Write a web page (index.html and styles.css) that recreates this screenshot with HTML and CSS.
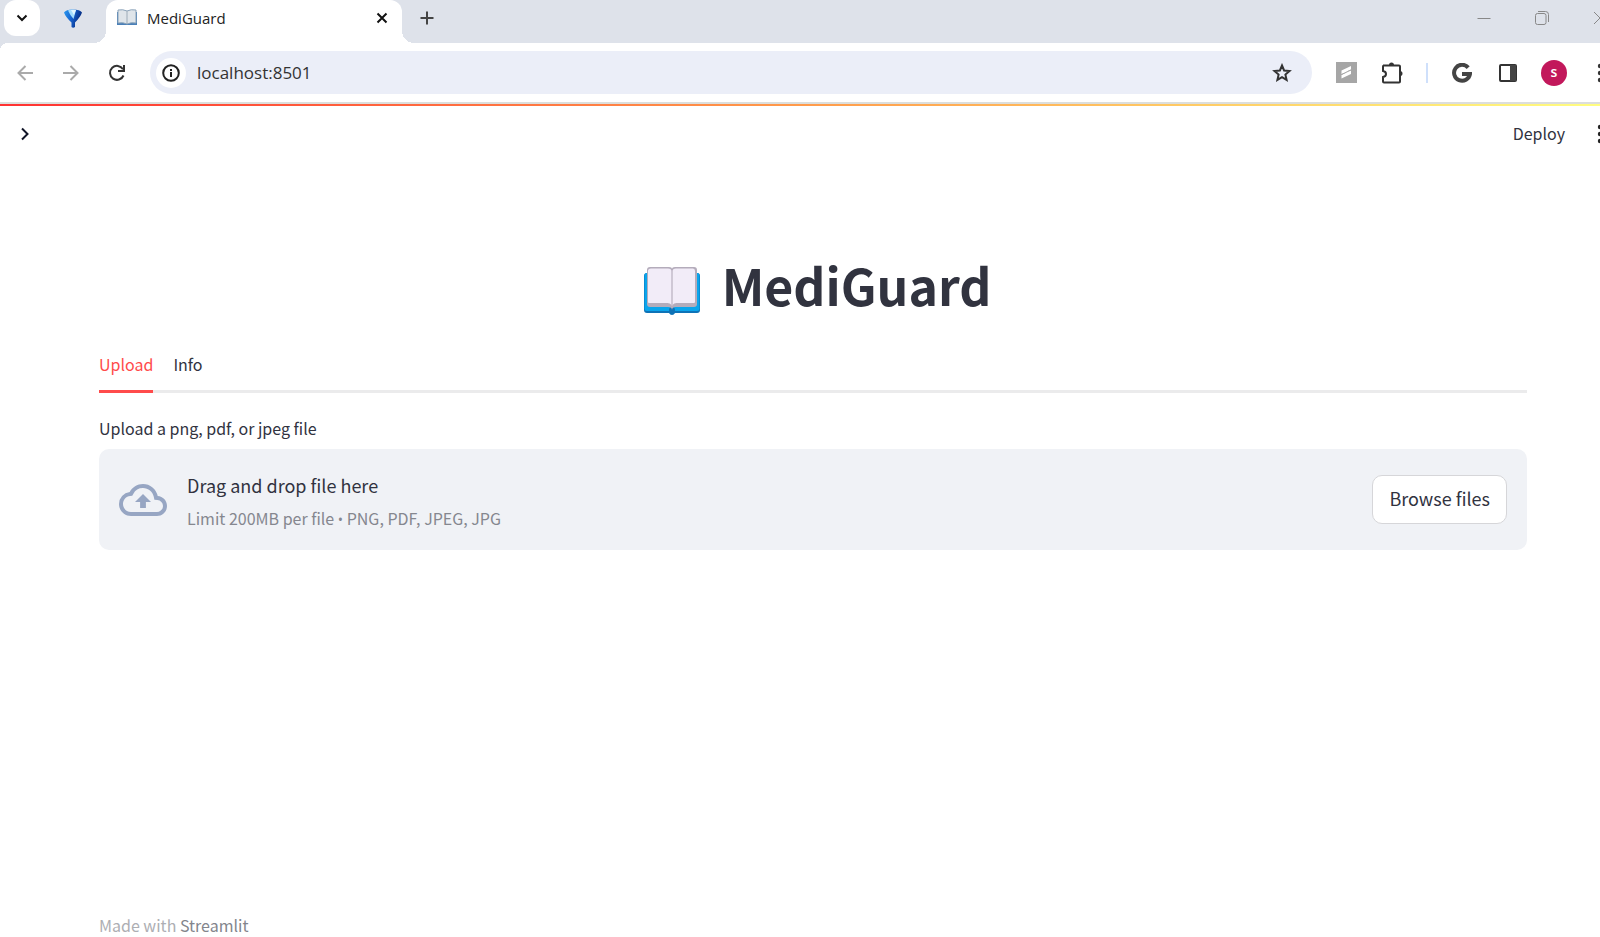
FILE: index.html
```
<!DOCTYPE html>
<html lang="en">
<head>
  <meta charset="UTF-8">
  <title>MediGuard</title>
  <link rel="stylesheet" href="styles.css">
</head>
<body>
  <!-- Browser tab strip -->
  <div class="tab-strip">
    <button class="tab-search" aria-label="Search tabs">
      <svg width="12" height="12" viewBox="0 0 12 12" fill="none" stroke="#111" stroke-width="2"><path d="M1.5 3.5 6 8l4.500-4.500"/></svg>
    </button>
    <button class="pinned-tab" aria-label="Pinned tab">
      <svg width="18" height="20" viewBox="0 0 18 20">
        <defs><linearGradient id="gem" x1="0" y1="0" x2="1" y2="0.300"><stop offset="0" stop-color="#2a9af0"/><stop offset="0.500" stop-color="#1763cf"/><stop offset="1" stop-color="#052b80"/></linearGradient></defs>
        <path d="M0 4.500Q2 1.500 9 1.500t9 3q-1.500 4.500-7 10V19q-2 1.500-3.500 0v-4.500Q1.500 9 0 4.500z" fill="url(#gem)"/>
        <path d="M4 2.500Q7 1 12 2l-2.500 9Q6 7 4 2.500z" fill="#a5defd"/>
        <path d="M7 2q3-.5 5 0l-2 5z" fill="#e2f6ff"/>
      </svg>
    </button>
    <div class="tab">
      <svg width="22" height="18" viewBox="0 0 22 18">
        <path d="M1 3h20v13H1z" fill="#4a80b8"/>
        <path d="M2 1q5-1 9 1 4-2 9-1v13q-5-1-9 1-4-2-9-1z" fill="#dfe5ea" stroke="#8ba3b9"/>
        <path d="M11 2v13" stroke="#9cabb8"/>
      </svg>
      <span class="tab-title">MediGuard</span>
      <button class="tab-close" aria-label="Close tab">
        <svg width="12" height="12" viewBox="0 0 12 12" stroke="#111" stroke-width="2"><path d="m1.500 1.500 9 9m0-9-9 9"/></svg>
      </button>
    </div>
    <button class="new-tab" aria-label="New tab">
      <svg width="14" height="14" viewBox="0 0 14 14" stroke="#444" stroke-width="2"><path d="M7 .5v13M.5 7h13"/></svg>
    </button>
    <div class="window-controls">
      <button aria-label="Minimize"><svg width="14" height="14" viewBox="0 0 14 14" stroke="#888"><path d="M.5 7.500h13"/></svg></button>
      <button aria-label="Restore"><svg width="14" height="14" viewBox="0 0 14 14" fill="none" stroke="#888"><rect x=".5" y="2.500" width="10.500" height="11" rx="2"/><path d="M3 .5h7.500q3 0 3 3V11"/></svg></button>
      <button aria-label="Close"><svg width="14" height="14" viewBox="0 0 14 14" stroke="#888"><path d="m1 1 12 12M13 1 1 13"/></svg></button>
    </div>
  </div>

  <!-- Browser toolbar -->
  <div class="toolbar">
    <button class="tool" aria-label="Back"><svg width="16" height="16" viewBox="0 0 16 16" fill="none" stroke="#aaa" stroke-width="2"><path d="M16 8H2M8.500 1 1.500 8l7 7"/></svg></button>
    <button class="tool" aria-label="Forward"><svg width="16" height="16" viewBox="0 0 16 16" fill="none" stroke="#aaa" stroke-width="2"><path d="M0 8h14M7.500 1l7 7-7 7"/></svg></button>
    <button class="tool" aria-label="Reload"><svg width="18" height="18" viewBox="0 0 18 18" fill="none" stroke="#333" stroke-width="2"><path d="M15.500 11.500A7 7 0 1 1 15 5.200"/><path d="M16 1v6h-6"/></svg></button>
    <div class="omnibox">
      <span class="site-info">
        <svg width="18" height="18" viewBox="0 0 18 18" fill="none" stroke="#222" stroke-width="2"><circle cx="9" cy="9" r="7.800"/><path d="M9 8v5M9 5v2"/></svg>
      </span>
      <input class="address" type="text" value="localhost:8501" aria-label="Address">
      <button class="bookmark" aria-label="Bookmark">
        <svg width="20" height="20" viewBox="0 0 20 20" fill="none" stroke="#333" stroke-width="2"><path d="m10 2.500 2.100 5 5.400.5-4.100 3.600 1.200 5.300-4.600-2.800-4.600 2.800 1.200-5.300L2.500 8l5.400-.5z"/></svg>
      </button>
    </div>
    <button class="tool" aria-label="Extension"><svg width="21" height="21" viewBox="0 0 21 21"><path d="M0 0h21v21H0z" fill="#a6a6a6"/><path d="M5.500 8.500 15 4v3.500l-5 2.300 5-1.300v3.500L5.500 16.500V13l5-2.500-5 1.500z" fill="#fff"/><path d="m5.500 12.500 9.500-4.500" stroke="#a6a6a6"/></svg></button>
    <button class="tool" aria-label="Extensions"><svg width="22" height="22" viewBox="0 0 22 22" fill="none" stroke="#333" stroke-width="2"><path d="M2 3.500h16q1 0 1 1v15q0 1-1 1H3q-1 0-1-1V15q3-.5 3-3t-3-3V4.500q0-1 1-1z"/><path d="M8 3q0-2.500 2.500-2.500T13 3zm11 6q2.500 0 2.500 2.500T19 14z" fill="#333" stroke="none"/></svg></button>
    <span class="divider"></span>
    <button class="tool" aria-label="Google"><svg width="20" height="20" viewBox="0 0 20 20" fill="none" stroke="#444" stroke-width="4"><path d="M16.200 4.600A8 8 0 1 0 18 11h-8"/></svg></button>
    <button class="tool" aria-label="Side panel"><svg width="18" height="18" viewBox="0 0 18 18"><rect x="1" y="1" width="16" height="16" rx="1" fill="none" stroke="#333" stroke-width="2"/><path d="M11 1h6v16h-6z" fill="#444"/></svg></button>
    <button class="tool" aria-label="Profile"><span class="avatar">s</span></button>
    <button class="tool menu" aria-label="Menu"><svg width="6" height="20" viewBox="0 0 6 20" fill="#333"><circle cx="3" cy="3" r="2.200"/><circle cx="3" cy="10" r="2.200"/><circle cx="3" cy="17" r="2.200"/></svg></button>
  </div>

  <!-- Streamlit app -->
  <div class="decoration"></div>
  <header class="app-header">
    <button class="expand" aria-label="Open sidebar"><svg width="10" height="14" viewBox="0 0 10 14" fill="none" stroke="#111528" stroke-width="2"><path d="m2 1.500 5.500 5.500L2 12.500"/></svg></button>
    <button class="deploy">Deploy</button>
    <button class="tool menu" aria-label="App menu"><svg width="6" height="20" viewBox="0 0 6 20" fill="#222"><circle cx="3" cy="3" r="2.200"/><circle cx="3" cy="10" r="2.200"/><circle cx="3" cy="17" r="2.200"/></svg></button>
  </header>
  <main>
    <h1>
      <svg class="book" width="56" height="48" viewBox="0 0 56 48">
        <path d="M3 6h50q3 0 3 3v34q0 3-3 3H31q-1 2-3 2t-3-2H3q-3 0-3-3V9q0-3 3-3z" fill="#0e73b7"/>
        <path d="M3 6h50q2.500 0 2.500 2v34q0 2-2.500 2H3q-2.500 0-2.500-2V8q0-2 2.500-2z" fill="#0aa5ec"/>
        <circle cx="28" cy="43" r="3" fill="#0e73b7"/>
        <path d="M6 0h19q3 0 3 2 0-2 3-2h19q3 0 3 3v34q0 3-3 3H32q-4 0-4 3 0-3-4-3H6q-3 0-3-3V3q0-3 3-3z" fill="#b4acbb"/>
        <path d="M7 1.500h17q3.500 0 3.500 3V38q-1.500-2-4-2H5q-1 0-1-1V4q0-2.500 3-2.500zm42 0H32q-3.500 0-3.500 3V38q1.500-2 4-2H50q1 0 1-1V4q0-2.500-2-2.500z" fill="#f2ecf8"/>
        <path d="M28 3v36" stroke="#cbc3d2"/>
      </svg>
      MediGuard
    </h1>
    <div class="tabs" role="tablist">
      <button class="app-tab active" role="tab" aria-selected="true">Upload</button>
      <button class="app-tab" role="tab" aria-selected="false">Info</button>
    </div>
    <p class="upload-label" id="uploadLabel">Upload a png, pdf, or jpeg file</p>
    <section class="dropzone" aria-labelledby="uploadLabel">
      <svg width="48" height="32" viewBox="0 4 24 16" fill="#97a6c3"><path d="M19.350 10.040A7.490 7.490 0 0 0 12 4C9.110 4 6.600 5.640 5.350 8.040A5.994 5.994 0 0 0 0 14c0 3.310 2.690 6 6 6h13c2.760 0 5-2.240 5-5 0-2.640-2.050-4.780-4.650-4.960zM19 18H6c-2.210 0-4-1.790-4-4 0-2.050 1.530-3.760 3.560-3.970l1.070-.11.5-.95A5.469 5.469 0 0 1 12 6c2.620 0 4.880 1.860 5.390 4.430l.3 1.500 1.530.11A2.980 2.980 0 0 1 22 15c0 1.650-1.350 3-3 3zM8 13h2.550v3h2.900v-3H16l-4-4z"/></svg>
      <div class="dropzone-text">
        <span class="drag">Drag and drop file here</span>
        <span class="limit">Limit 200MB per file <span class="bullet">•</span> PNG, PDF, JPEG, JPG</span>
      </div>
      <button class="browse">Browse files</button>
    </section>
  </main>
  <footer>Made with <a href="#">Streamlit</a></footer>
</body>
</html>
```
FILE: styles.css
```
* {
  box-sizing: border-box;
}
body {
  margin: 0;
  min-height: 100vh;
  display: flex;
  flex-direction: column;
  overflow: hidden;
  background-color: #fff;
  color: #31333f;
  font-family: "Noto Sans CJK SC", "Noto Sans", sans-serif;
  font-weight: 400;
  font-size: 16px;
}
button {
  display: flex;
  align-items: center;
  justify-content: center;
  padding: 0;
  border: none;
  background: none;
  color: inherit;
  font: inherit;
  cursor: pointer;
}
svg {
  display: block;
  flex-shrink: 0;
}

/* Tab strip */
.tab-strip {
  display: flex;
  height: 43px;
  padding-left: 4px;
  background-color: #dee2ea;
}
.tab-search {
  width: 36px;
  height: 36px;
  border-radius: 12px;
  background-color: #fff;
}
.pinned-tab {
  width: 66px;
  height: 36px;
}
.tab {
  position: relative;
  display: flex;
  align-items: center;
  gap: 9px;
  width: 296px;
  padding: 0 14px 7px 10px;
  border-radius: 12px 12px 0 0;
  background-color: #fff;
}
.tab::before,
.tab::after {
  content: "";
  position: absolute;
  bottom: 0;
  width: 12px;
  height: 12px;
}
.tab::before {
  right: 100%;
  background: radial-gradient(circle at 0 0, transparent 12px, #fff 12px);
}
.tab::after {
  left: 100%;
  background: radial-gradient(circle at 100% 0, transparent 12px, #fff 12px);
}
.tab-title {
  flex: 1;
  color: #222;
  font-family: "Open Sans", sans-serif;
  font-size: 15px;
}
.new-tab {
  width: 50px;
  height: 36px;
}
.window-controls {
  display: flex;
  margin-left: auto;
  margin-right: -29px;
}
.window-controls button {
  width: 58px;
  height: 35px;
}

/* Toolbar */
.toolbar {
  display: flex;
  align-items: center;
  height: 59px;
  padding-left: 2px;
  background: radial-gradient(circle at 8px 8px, #fff 8px, #dee2ea 8px) 0 0 / 8px 8px no-repeat;
}
.tool {
  flex-shrink: 0;
  width: 46px;
  height: 36px;
}
.menu {
  margin-right: -23px;
}
.omnibox {
  flex: 1;
  display: flex;
  align-items: center;
  height: 43px;
  margin: 0 11px 0 10px;
  padding: 0 20px 0 6px;
  border-radius: 22px;
  background-color: #ebeef8;
}
.site-info {
  display: flex;
  align-items: center;
  justify-content: center;
  width: 30px;
  height: 30px;
  border-radius: 50%;
  background-color: #fff;
}
.address {
  flex: 1;
  padding: 0 11px;
  border: none;
  outline: none;
  background: none;
  color: #333;
  font-family: "Open Sans", sans-serif;
  font-size: 17px;
}
.divider {
  width: 2px;
  height: 20px;
  margin: 0 11px;
  background-color: #cfe0fb;
}
.avatar {
  width: 26px;
  height: 26px;
  border-radius: 50%;
  background-color: #c2185b;
  color: #fff;
  font-family: "Open Sans", sans-serif;
  font-weight: 600;
  font-size: 14px;
  line-height: 24px;
}

/* App header */
.decoration {
  height: 4px;
  border-top: 2px solid #dcdedc;
  background: linear-gradient(90deg, #ff3232, #ff9a4a 50%, #fffd80);
  background-clip: padding-box;
}
.app-header {
  display: flex;
  align-items: center;
  height: 56px;
  padding-left: 20px;
}
.deploy {
  margin-left: auto;
  margin-right: 12px;
  padding-bottom: 2px;
}

/* Main content */
main {
  flex: 1;
  padding: 82px 73px 0 99px;
}
h1 {
  display: flex;
  align-items: center;
  justify-content: center;
  gap: 22px;
  margin: 0;
  padding-left: 9px;
  font-weight: 700;
  font-size: 50px;
  line-height: 80px;
}
.book {
  margin-top: 14px;
}
.tabs {
  display: flex;
  gap: 20px;
  margin-top: 15px;
  border-bottom: 3px solid #ebebec;
}
.app-tab {
  height: 54px;
  margin-bottom: -3px;
  padding-bottom: 1px;
  border-bottom: 3px solid transparent;
}
.app-tab.active {
  color: #ff4b4b;
  border-bottom-color: #ff4b4b;
}
.upload-label {
  margin: 23px 0 9px;
  line-height: 24px;
}
.dropzone {
  display: flex;
  align-items: center;
  gap: 20px;
  min-height: 101px;
  padding: 16px 20px;
  border-radius: 10px;
  background-color: #f0f2f6;
}
.dropzone-text {
  flex: 1;
  display: flex;
  flex-direction: column;
  gap: 6px;
  padding-top: 5px;
}
.drag {
  font-size: 18px;
  line-height: 28px;
}
.limit {
  color: #85878f;
  line-height: 26px;
}
.bullet {
  font-family: "Open Sans", sans-serif;
  font-size: 14px;
}
.browse {
  height: 49px;
  padding: 0 16px 3px;
  border: 1px solid #d6d6d9;
  border-radius: 10px;
  background-color: #fff;
  font-size: 18px;
}
footer {
  padding: 0 99px;
  color: #adaeb3;
  line-height: 24px;
}
footer a {
  color: #83858c;
  text-decoration: none;
}
```
